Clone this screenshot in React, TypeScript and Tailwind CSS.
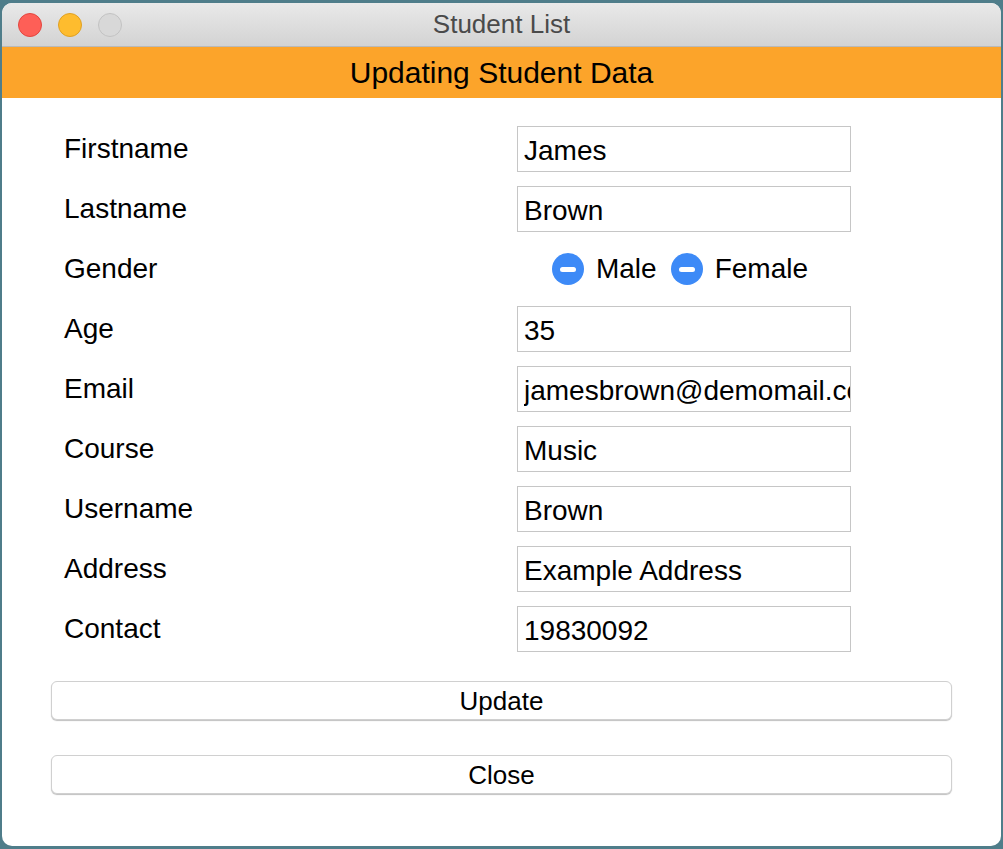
const fields = [
  { label: "Firstname", value: "James" },
  { label: "Lastname", value: "Brown" },
  { label: "Gender", value: null },
  { label: "Age", value: "35" },
  { label: "Email", value: "jamesbrown@demomail.com" },
  { label: "Course", value: "Music" },
  { label: "Username", value: "Brown" },
  { label: "Address", value: "Example Address" },
  { label: "Contact", value: "19830092" },
];

function Radio({ label }: { label: string }) {
  return (
    <div className="flex items-center gap-[12px]">
      <span className="flex h-[32px] w-[32px] items-center justify-center rounded-full bg-[#3d8af7]">
        <span className="h-[5px] w-[16px] rounded-full bg-white" />
      </span>
      <span>{label}</span>
    </div>
  );
}

function Light({ color, ring }: { color: string; ring: string }) {
  return <span className={`h-[24px] w-[24px] rounded-full border ${color} ${ring}`} />;
}

export default function App() {
  return (
    <div className="h-[849px] w-[1003px] bg-[#4f7d8a] pt-[3px] pl-[2px] font-['Liberation_Sans',Arial,sans-serif]">
      <div className="flex h-[843px] w-[999px] flex-col overflow-hidden rounded-[10px] bg-white">
        <div className="relative flex h-[44px] shrink-0 items-center border-b border-[#b9b9b9] bg-gradient-to-b from-[#e9e9e9] to-[#d3d3d3]">
          <div className="absolute left-[16px] flex gap-[16px]">
            <Light color="bg-[#fe5f57]" ring="border-[#e2463f]" />
            <Light color="bg-[#febc2e]" ring="border-[#dfa023]" />
            <Light color="bg-[#d8d8d8]" ring="border-[#c2c2c2]" />
          </div>
          <div className="w-full text-center text-[26px] text-[#4a4a4a]">Student List</div>
        </div>
        <div className="flex h-[51px] shrink-0 items-center justify-center bg-[#fca42a] text-[30px] text-black">
          Updating Student Data
        </div>
        <div className="flex flex-col gap-[14px] pt-[28px] text-[28px] text-black">
          {fields.map((f) => (
            <div key={f.label} className="flex h-[46px] items-center">
              <div className="w-[515px] pl-[62px]">{f.label}</div>
              {f.value === null ? (
                <div className="flex w-[334px] items-center justify-center gap-[14px] pr-[8px]">
                  <Radio label="Male" />
                  <Radio label="Female" />
                </div>
              ) : (
                <input
                  readOnly
                  value={f.value}
                  className="h-[46px] w-[334px] border border-[#c6c6c6] bg-white pt-[3px] pl-[6px] outline-none"
                />
              )}
            </div>
          ))}
        </div>
        <div className="flex flex-col gap-[35px] px-[49px] pt-[29px] text-[26px] text-black">
          <button className="h-[39px] rounded-[6px] border border-[#d0d0d0] bg-white shadow-[0_1px_1px_rgba(0,0,0,0.25)]">
            Update
          </button>
          <button className="h-[39px] rounded-[6px] border border-[#d0d0d0] bg-white shadow-[0_1px_1px_rgba(0,0,0,0.25)]">
            Close
          </button>
        </div>
      </div>
    </div>
  );
}
